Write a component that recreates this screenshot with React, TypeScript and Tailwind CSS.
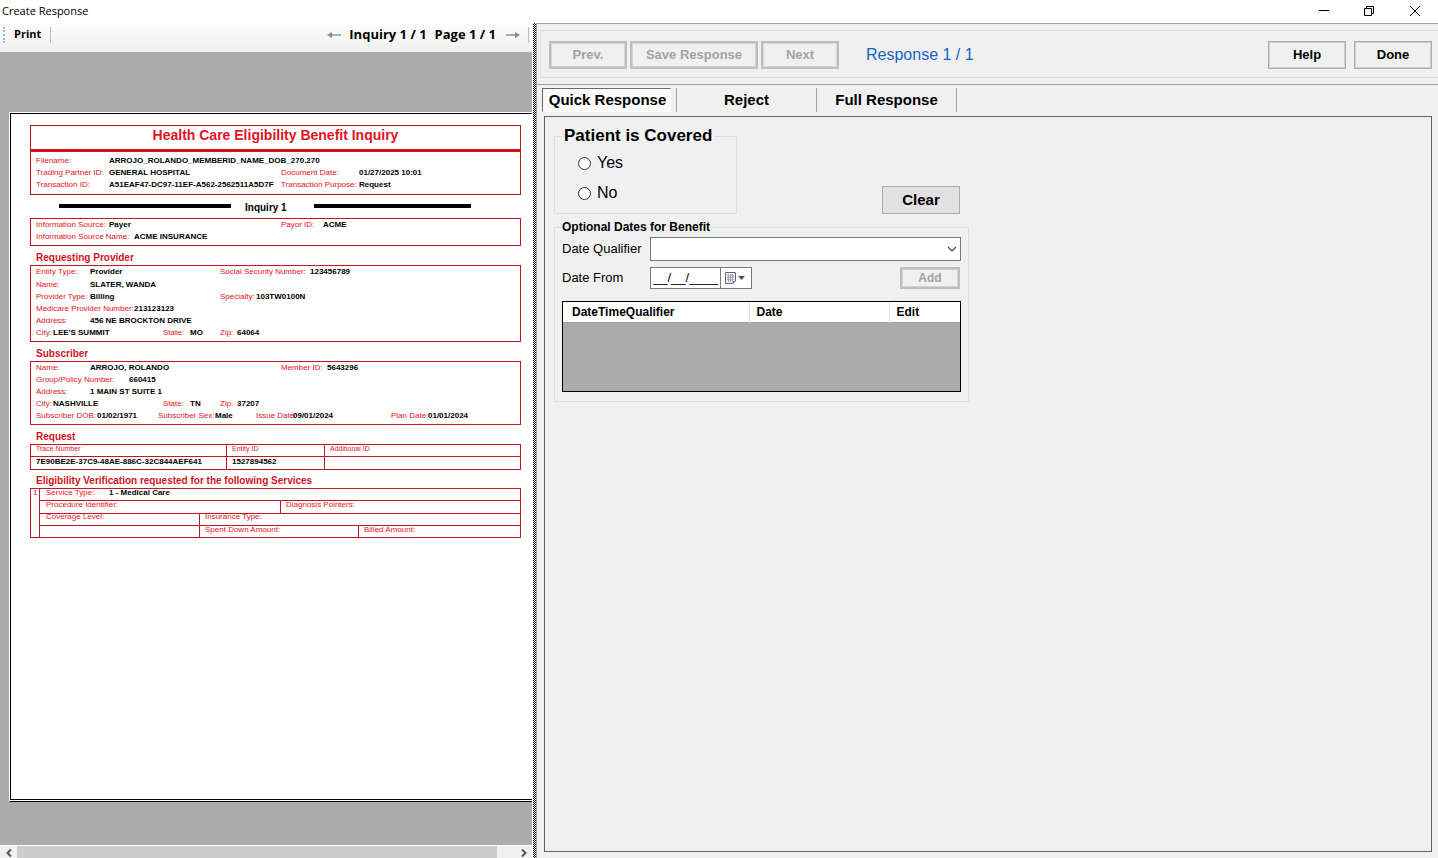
import type { ReactNode } from "react"

type BoxProps = { className?: string; children?: ReactNode }

const Label = ({ className = "", children }: BoxProps) => (
  <span className={`shrink-0 whitespace-nowrap text-[#e8101c] ${className}`}>{children}</span>
)

const Value = ({ className = "", children }: BoxProps) => (
  <span className={`shrink-0 whitespace-nowrap font-bold text-black ${className}`}>{children}</span>
)

const Row = ({ className = "", children }: BoxProps) => <div className={`flex h-3 leading-3 ${className}`}>{children}</div>

const FormBox = ({ className = "", children }: BoxProps) => (
  <div className={`border border-[#c8141c] pl-[5px] ${className}`}>{children}</div>
)

const SectionTitle = ({ children }: BoxProps) => (
  <h3 className="pl-1.5 text-[10px] font-bold leading-3 text-[#d0141c]">{children}</h3>
)

const ToolButton = ({ className = "", children }: BoxProps) => (
  <button className={`h-7 border border-[#adadad] bg-[#f0f0f0] text-[13px] font-bold text-black shadow-[inset_0_0_0_1px_#cfcfcf] ${className}`}>
    {children}
  </button>
)

const DisabledButton = ({ className = "", children }: BoxProps) => (
  <button disabled className={`border-2 border-[#bfbfbf] bg-[#f0f0f0] font-bold text-[#a3a3a3] shadow-[inset_0_0_0_1px_#d4d4d4] ${className}`}>
    {children}
  </button>
)

const TitleBar = () => (
  <header className="flex h-[23px] shrink-0 items-center justify-between bg-white pl-0.5 pr-[17px]">
    <h1 className="font-['Open_Sans',sans-serif] text-[11px]">Create Response</h1>
    <div className="flex items-center gap-[31px] pb-0.5">
      <button aria-label="Minimize">
        <svg width="15" height="12" viewBox="0 0 15 12" stroke="#000" fill="none"><path d="M2 5.5h10" /></svg>
      </button>
      <button aria-label="Restore">
        <svg width="15" height="12" viewBox="0 0 15 12" stroke="#000" fill="none">
          <path d="M1.5 3.5h7v7h-7zM3.5 3.5v-2h7v7h-2" />
        </svg>
      </button>
      <button aria-label="Close">
        <svg width="12" height="12" viewBox="0 0 12 12" stroke="#000" fill="none"><path d="M1 1l10 10M11 1L1 11" /></svg>
      </button>
    </div>
  </header>
)

const ViewerToolbar = () => (
  <div className="flex h-[29px] shrink-0 items-center bg-linear-to-b from-[#fdfdfd] to-[#f0f0f0] pb-1.5 pl-[3px] pr-[3px] font-['Open_Sans',sans-serif] text-[13px] font-bold">
    <div className="h-4 border-l-2 border-dotted border-[#b4b4b4]" />
    <button className="ml-[9px] text-[11px]">Print</button>
    <div className="ml-[9px] h-4 border-l border-[#bdbdbd]" />
    <div className="ml-auto flex items-center">
      <button aria-label="Previous page">
        <svg width="14" height="8" viewBox="0 0 14 8"><path d="M3 4h11" stroke="#8a8a8a" strokeWidth="1.4" /><path d="M0 4l5-3v6z" fill="#8a8a8a" /></svg>
      </button>
      <span className="ml-2">Inquiry 1 / 1</span>
      <span className="ml-2">Page 1 / 1</span>
      <button aria-label="Next page" className="ml-[10px]">
        <svg width="14" height="8" viewBox="0 0 14 8"><path d="M0 4h11" stroke="#8a8a8a" strokeWidth="1.4" /><path d="M14 4l-5-3v6z" fill="#8a8a8a" /></svg>
      </button>
      <div className="ml-2 h-4 border-l border-[#bdbdbd]" />
    </div>
  </div>
)

const InquiryForm = () => (
  <div className="ml-[19px] mt-[11px] w-[491px] text-[8px]">
    <div className="border border-[#c8141c]">
      <h2 className="h-[23px] text-center text-sm font-bold leading-[19px] text-[#e0141e]">
        Health Care Eligibility Benefit Inquiry
      </h2>
      <div className="border-t-3 border-[#d9101a] py-[3px] pl-[5px]">
        <Row>
          <Label className="w-[73px]">Filename:</Label>
          <Value>ARROJO_ROLANDO_MEMBERID_NAME_DOB_270.270</Value>
        </Row>
        <Row>
          <Label className="w-[73px]">Trading Partner ID:</Label>
          <Value className="w-[172px]">GENERAL HOSPITAL</Value>
          <Label className="w-[78px]">Document Date:</Label>
          <Value>01/27/2025 10:01</Value>
        </Row>
        <Row>
          <Label className="w-[73px]">Transaction ID:</Label>
          <Value className="w-[172px]">A51EAF47-DC97-11EF-A562-2562511A5D7F</Value>
          <Label className="w-[78px]">Transaction Purpose:</Label>
          <Value>Request</Value>
        </Row>
      </div>
    </div>

    <div className="flex h-[23px] items-center pb-0.5 pl-[29px] pr-[50px]">
      <div className="h-1 w-[172px] bg-black" />
      <h3 className="flex-1 pl-3.5 pt-1 text-[10px] font-bold leading-3">Inquiry 1</h3>
      <div className="h-1 w-[157px] bg-black" />
    </div>

    <FormBox className="pb-0.5">
      <Row>
        <Label className="w-[73px]">Information Source:</Label>
        <Value className="w-[172px]">Payer</Value>
        <Label className="w-[42px]">Payor ID:</Label>
        <Value>ACME</Value>
      </Row>
      <Row>
        <Label className="w-[98px]">Information Source Name:</Label>
        <Value>ACME INSURANCE</Value>
      </Row>
    </FormBox>

    <div className="pb-px pt-1.5"><SectionTitle>Requesting Provider</SectionTitle></div>
    <FormBox className="pb-0.5">
      <Row className="mb-px">
        <Label className="w-[54px]">Entity Type:</Label>
        <Value className="w-[130px]">Provider</Value>
        <Label className="w-[90px]">Social Security Number:</Label>
        <Value>123456789</Value>
      </Row>
      <Row>
        <Label className="w-[54px]">Name:</Label>
        <Value>SLATER, WANDA</Value>
      </Row>
      <Row>
        <Label className="w-[54px]">Provider Type:</Label>
        <Value className="w-[130px]">Billing</Value>
        <Label className="w-9">Specialty:</Label>
        <Value>103TW0100N</Value>
      </Row>
      <Row>
        <Label className="w-[98px]">Medicare Provider Number:</Label>
        <Value>213123123</Value>
      </Row>
      <Row>
        <Label className="w-[54px]">Address:</Label>
        <Value>456 NE BROCKTON DRIVE</Value>
      </Row>
      <Row>
        <Label className="w-[17px]">City:</Label>
        <Value className="w-[110px]">LEE'S SUMMIT</Value>
        <Label className="w-[27px]">State:</Label>
        <Value className="w-[30px]">MO</Value>
        <Label className="w-[17px]">Zip:</Label>
        <Value>64064</Value>
      </Row>
    </FormBox>

    <div className="pb-px pt-1.5"><SectionTitle>Subscriber</SectionTitle></div>
    <FormBox className="pb-0.5">
      <Row>
        <Label className="w-[54px]">Name:</Label>
        <Value className="w-[191px]">ARROJO, ROLANDO</Value>
        <Label className="w-[46px]">Member ID:</Label>
        <Value>5643296</Value>
      </Row>
      <Row>
        <Label className="w-[93px]">Group/Policy Number:</Label>
        <Value>660415</Value>
      </Row>
      <Row>
        <Label className="w-[54px]">Address:</Label>
        <Value>1 MAIN ST SUITE 1</Value>
      </Row>
      <Row>
        <Label className="w-[17px]">City:</Label>
        <Value className="w-[110px]">NASHVILLE</Value>
        <Label className="w-[27px]">State:</Label>
        <Value className="w-[30px]">TN</Value>
        <Label className="w-[17px]">Zip:</Label>
        <Value>37207</Value>
      </Row>
      <Row>
        <Label className="w-[61px]">Subscriber DOB:</Label>
        <Value className="w-[61px]">01/02/1971</Value>
        <Label className="w-[57px]">Subscriber Sex:</Label>
        <Value className="w-[41px]">Male</Value>
        <Label className="w-[37px]">Issue Date:</Label>
        <Value className="w-[98px]">09/01/2024</Value>
        <Label className="w-[37px]">Plan Date:</Label>
        <Value>01/01/2024</Value>
      </Row>
    </FormBox>

    <div className="pb-px pt-1.5"><SectionTitle>Request</SectionTitle></div>
    <table className="w-full table-fixed border-separate border-spacing-0 border-b border-r border-[#c8141c] text-left">
      <thead>
        <tr className="text-[7px] text-[#e0141e]">
          <th className="h-3 w-[196px] border-l border-t border-[#c8141c] p-0 pl-[5px] align-top font-normal leading-[8px]">Trace Number</th>
          <th className="w-[98px] border-l border-t border-[#c8141c] p-0 pl-[5px] align-top font-normal leading-[8px]">Entity ID</th>
          <th className="border-l border-t border-[#c8141c] p-0 pl-[5px] align-top font-normal leading-[8px]">Additional ID</th>
        </tr>
      </thead>
      <tbody>
        <tr className="font-bold">
          <td className="h-[13px] border-l border-t border-[#c8141c] p-0 pl-[5px] align-top leading-[10px]">7E90BE2E-37C9-48AE-886C-32C844AEF641</td>
          <td className="border-l border-t border-[#c8141c] p-0 pl-[5px] align-top leading-[10px]">1527894562</td>
          <td className="border-l border-t border-[#c8141c] p-0"></td>
        </tr>
      </tbody>
    </table>

    <div className="pb-px pt-[5px]"><SectionTitle>Eligibility Verification requested for the following Services</SectionTitle></div>
    <div className="flex border border-[#c8141c] leading-[7px]">
      <Label className="w-2 pl-0.5">1</Label>
      <div className="flex-1 border-l border-[#c8141c]">
        <div className="flex h-[11px] pl-1.5">
          <Label className="w-[63px]">Service Type:</Label>
          <Value>1 - Medical Care</Value>
        </div>
        <div className="flex h-[13px] border-t border-[#c8141c]">
          <Label className="w-60 pl-1.5">Procedure Identifier:</Label>
          <Label className="border-l border-[#c8141c] pl-[5px]">Diagnosis Pointers:</Label>
        </div>
        <div className="flex h-3 border-t border-[#c8141c] leading-[5px]">
          <Label className="w-[159px] pl-1.5">Coverage Level:</Label>
          <Label className="border-l border-[#c8141c] pl-[5px]">Insurance Type:</Label>
        </div>
        <div className="flex h-3 border-t border-[#c8141c]">
          <Label className="w-[159px]"></Label>
          <Label className="w-[159px] border-l border-[#c8141c] pl-[5px]">Spent Down Amount:</Label>
          <Label className="border-l border-[#c8141c] pl-[5px]">Billed Amount:</Label>
        </div>
      </div>
    </div>
  </div>
)

const DocumentViewer = () => (
  <section className="flex w-[532px] shrink-0 flex-col">
    <ViewerToolbar />
    <div className="flex min-h-0 flex-1 flex-col overflow-hidden bg-[#ababab] pb-[43px] pl-[9px] pt-[60px]">
      <div className="flex flex-1 flex-col border-b border-l border-t border-b-black border-l-white border-t-white bg-white pb-px">
        <div className="flex-1 border-y border-l border-black">
          <InquiryForm />
        </div>
      </div>
    </div>
    <div className="flex h-[13px] shrink-0 border-t border-white bg-[#f0f0f0]">
      <button aria-label="Scroll left" className="flex w-[17px] items-center justify-center pt-0.5">
        <svg width="6" height="8" viewBox="0 0 6 8" fill="none" stroke="#555" strokeWidth="2"><path d="M5 0.5L1.5 4L5 7.5" /></svg>
      </button>
      <div className="w-[480px] bg-[#cdcdcd]" />
      <button aria-label="Scroll right" className="ml-auto flex w-[17px] items-center justify-center pt-0.5">
        <svg width="6" height="8" viewBox="0 0 6 8" fill="none" stroke="#555" strokeWidth="2"><path d="M1 0.5L4.5 4L1 7.5" /></svg>
      </button>
    </div>
  </section>
)

const ResponseToolbar = () => (
  <div className="border-b border-[#a0a0a0] pb-1.5 pl-[3px] pt-1.5">
    <div className="flex h-12 items-center border-y border-l border-[#dcdcdc] pb-px pl-2 pr-1.5 pt-0.5">
      <DisabledButton className="h-7 w-[78px] text-[13px]">Prev.</DisabledButton>
      <DisabledButton className="ml-[3px] h-7 w-32 text-[13px]">Save Response</DisabledButton>
      <DisabledButton className="ml-[3px] h-7 w-[78px] text-[13px]">Next</DisabledButton>
      <span className="ml-[27px] text-base text-[#1565c0]">Response 1 / 1</span>
      <ToolButton className="ml-auto w-[78px]">Help</ToolButton>
      <ToolButton className="ml-2 w-[78px]">Done</ToolButton>
    </div>
  </div>
)

const ResponseTabs = () => (
  <div role="tablist" className="flex h-[31px] pl-[5px] pt-[3px] text-[15px] font-bold">
    <div className="h-6 w-[135px] border-r border-[#a0a0a0]">
      <button role="tab" aria-selected="true" className="h-6 w-[129px] border border-b-white border-l-[#696969] border-r-white border-t-[#696969] bg-[#fafafa] pl-0.5 leading-5">
        Quick Response
      </button>
    </div>
    <button role="tab" aria-selected="false" className="h-6 w-[140px] border-r border-[#a0a0a0] pb-px leading-5">Reject</button>
    <button role="tab" aria-selected="false" className="h-6 w-[140px] border-r border-[#a0a0a0] pb-px leading-5">Full Response</button>
  </div>
)

const QuickResponse = () => (
  <div className="mb-1.5 ml-[7px] mr-1.5 flex-1 border border-[#646464] pl-[9px] pt-[9px]">
    <div className="w-[415px]">
      <div className="flex items-end justify-between pr-[9px]">
        <fieldset className="h-[88px] w-[183px] border border-[#dcdcdc] pl-[23px]">
          <legend className="-ml-4 px-0.5 text-[17px] font-bold leading-5">Patient is Covered</legend>
          <div className="flex flex-col gap-2.5 pt-[7px]">
            <label className="flex h-5 items-center gap-1.5 text-base">
              <input type="radio" name="covered" className="size-[13px] appearance-none rounded-full border border-[#333] bg-white checked:border-4" />
              Yes
            </label>
            <label className="flex h-5 items-center gap-1.5 text-base">
              <input type="radio" name="covered" className="size-[13px] appearance-none rounded-full border border-[#333] bg-white checked:border-4" />
              No
            </label>
          </div>
        </fieldset>
        <button className="h-7 w-[78px] border border-[#adadad] bg-[#e1e1e1] text-[15px] font-bold">Clear</button>
      </div>

      <fieldset className="mt-1.5 border border-[#dcdcdc] pb-[9px] pl-[7px] pr-[7px] pt-[3px]">
        <legend className="text-xs font-bold leading-[14px]">Optional Dates for Benefit</legend>
        <div className="flex items-center">
          <label htmlFor="qualifier" className="w-[88px] text-[13px]">Date Qualifier</label>
          <div className="relative flex flex-1">
            <select id="qualifier" className="h-6 w-full appearance-none border border-[#7a7a7a] bg-white px-1 text-sm">
              <option></option>
            </select>
            <svg className="pointer-events-none absolute right-1 top-2" width="10" height="8" viewBox="0 0 10 8" fill="none" stroke="#444" strokeWidth="1.2"><path d="M1 2l4 4l4-4" /></svg>
          </div>
        </div>
        <div className="mt-1.5 flex items-center">
          <label htmlFor="from" className="w-[88px] text-[13px]">Date From</label>
          <div className="flex h-[22px] w-[102px] border border-[#7a7a7a] bg-white">
            <input id="from" defaultValue="__/__/____" className="w-[70px] border-r border-[#7a7a7a] pl-0.5 text-[13px] outline-none" />
            <button aria-label="Pick a date" className="flex flex-1 items-center gap-0.5 pl-1">
              <svg width="11" height="12" viewBox="0 0 11 12">
                <path d="M0.5 0.5h10v8.5l-2.5 2.5h-7.5z" fill="#eef0f5" stroke="#66677a" />
                <path d="M2 3.5h7M2 5.5h7M2 7.5h7M3.5 2v8M5.5 2v8M7.5 2v8" stroke="#a9acbd" />
                <path d="M8 11.5v-2.5h2.5z" fill="#66677a" />
              </svg>
              <svg width="7" height="4" viewBox="0 0 7 4"><path d="M0 0h7L3.5 4z" fill="#4d4d6b" /></svg>
            </button>
          </div>
          <DisabledButton className="ml-auto mr-px h-[22px] w-[60px] text-xs leading-4">Add</DisabledButton>
        </div>
        <div className="mt-3 h-[91px] border border-black bg-[#ababab]">
          <table className="w-full table-fixed border-b border-[#a0a0a0] bg-white text-left text-xs">
            <thead>
              <tr className="h-5">
                <th className="w-[186px] border-r border-[#e2e2e2] p-0 pl-[9px]">DateTimeQualifier</th>
                <th className="w-[140px] border-r border-[#e2e2e2] p-0 pl-[7px]">Date</th>
                <th className="p-0 pl-[7px]">Edit</th>
              </tr>
            </thead>
          </table>
        </div>
      </fieldset>
    </div>
  </div>
)

export default function App() {
  return (
    <div className="flex h-screen flex-col overflow-hidden bg-white font-['Liberation_Sans',Arial,sans-serif] text-black">
      <TitleBar />
      <main className="flex min-h-0 flex-1">
        <DocumentViewer />
        <div className="ml-px w-[3px] shrink-0 bg-[conic-gradient(#000_25%,#fff_0_50%,#000_0_75%,#fff_0)] bg-[length:2px_2px]" />
        <section className="flex min-w-0 flex-1 flex-col border-l border-t border-[#a0a0a0] bg-[#f0f0f0]">
          <ResponseToolbar />
          <ResponseTabs />
          <QuickResponse />
        </section>
      </main>
    </div>
  )
}
